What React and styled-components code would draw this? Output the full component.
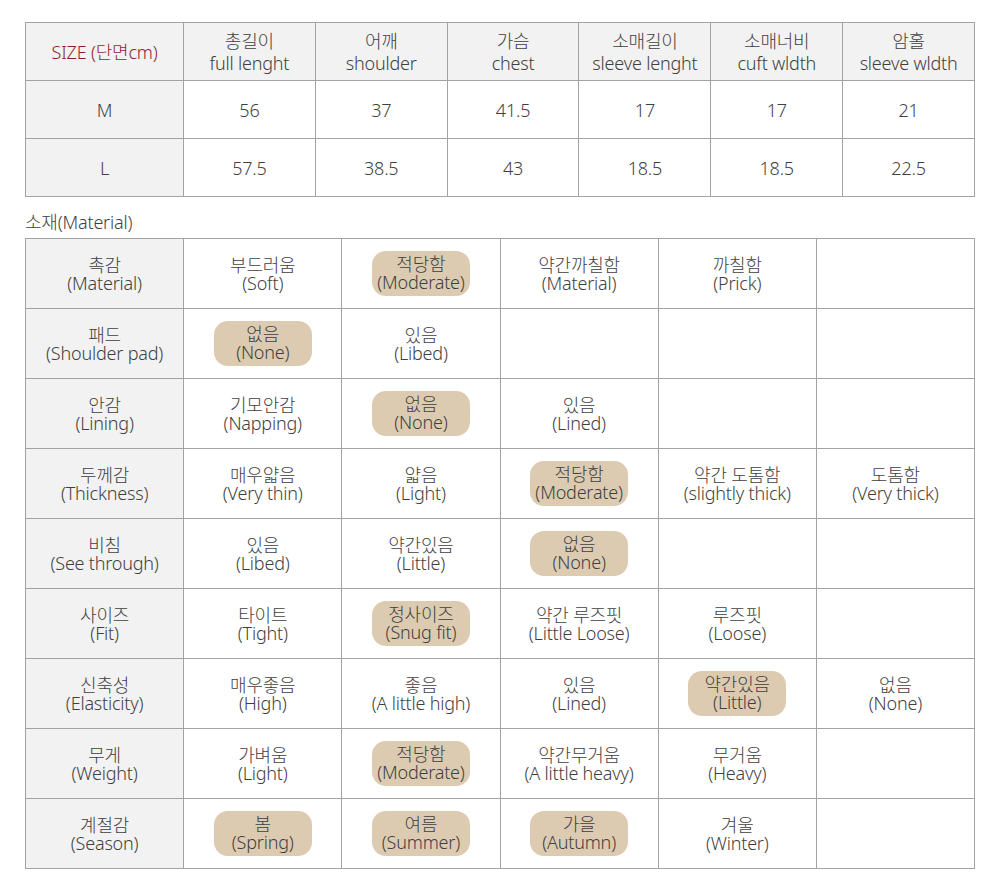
import React from 'react';
import styled, { createGlobalStyle } from 'styled-components';

const GlobalStyle = createGlobalStyle`
  body {
    margin: 0;
    background: #ffffff;
    font-family: 'Noto Sans', 'Noto Sans CJK KR', sans-serif;
    font-weight: 300;
    color: #3f3f3f;
  }
`;

const Page = styled.div`
  width: 950px;
  padding: 22px 25px 18px;
`;

const Grid = styled.div`
  display: grid;
  grid-template-columns: ${({ first }) => first} repeat(${({ cols }) => cols}, 1fr);
  grid-auto-rows: ${({ rowH }) => rowH}px;
  gap: 1px;
  background: #a3a3a3;
  border: 1px solid #a3a3a3;
`;

const Cell = styled.div`
  display: flex;
  flex-direction: column;
  align-items: center;
  justify-content: center;
  text-align: center;
  background: ${({ shade }) => (shade ? '#f2f2f2' : '#ffffff')};
  color: ${({ accent }) => (accent ? '#8e1f2c' : '#3f3f3f')};
  font-size: 18px;
  line-height: 22px;
  letter-spacing: -0.2px;
`;

const Stack = styled.div`
  display: flex;
  flex-direction: column;
  align-items: center;
  line-height: 18px;
  font-size: 18px;
`;

const Pill = styled(Stack)`
  background: #dccbb1;
  border-radius: 14px;
  min-width: 98px;
  padding: 4px 5px 5px;
  box-sizing: border-box;
`;

const Label = styled.div`
  font-size: 18px;
  margin: 15px 0 6px;
  line-height: 20px;
  letter-spacing: -0.2px;
`;

const sizeHead = [
  ['총길이', 'full lenght'],
  ['어깨', 'shoulder'],
  ['가슴', 'chest'],
  ['소매길이', 'sleeve lenght'],
  ['소매너비', 'cuft wldth'],
  ['암홀', 'sleeve wldth'],
];

const sizeRows = [
  ['M', '56', '37', '41.5', '17', '17', '21'],
  ['L', '57.5', '38.5', '43', '18.5', '18.5', '22.5'],
];

// [ko, en, selected]
const material = [
  [['촉감', '(Material)'], [['부드러움', '(Soft)'], ['적당함', '(Moderate)', 1], ['약간까칠함', '(Material)'], ['까칠함', '(Prick)']]],
  [['패드', '(Shoulder pad)'], [['없음', '(None)', 1], ['있음', '(Libed)']]],
  [['안감', '(Lining)'], [['기모안감', '(Napping)'], ['없음', '(None)', 1], ['있음', '(Lined)']]],
  [['두께감', '(Thickness)'], [['매우얇음', '(Very thin)'], ['얇음', '(Light)'], ['적당함', '(Moderate)', 1], ['약간 도톰함', '(slightly thick)'], ['도톰함', '(Very thick)']]],
  [['비침', '(See through)'], [['있음', '(Libed)'], ['약간있음', '(Little)'], ['없음', '(None)', 1]]],
  [['사이즈', '(Fit)'], [['타이트', '(Tight)'], ['정사이즈', '(Snug fit)', 1], ['약간 루즈핏', '(Little Loose)'], ['루즈핏', '(Loose)']]],
  [['신축성', '(Elasticity)'], [['매우좋음', '(High)'], ['좋음', '(A little high)'], ['있음', '(Lined)'], ['약간있음', '(Little)', 1], ['없음', '(None)']]],
  [['무게', '(Weight)'], [['가벼움', '(Light)'], ['적당함', '(Moderate)', 1], ['약간무거움', '(A little heavy)'], ['무거움', '(Heavy)']]],
  [['계절감', '(Season)'], [['봄', '(Spring)', 1], ['여름', '(Summer)', 1], ['가을', '(Autumn)', 1], ['겨울', '(Winter)']]],
];

function Option({ ko, en, on }) {
  const Box = on ? Pill : Stack;
  return (
    <Box>
      <span>{ko}</span>
      <span>{en}</span>
    </Box>
  );
}

export default function App() {
  return (
    <Page>
      <GlobalStyle />
      <Grid first="157px" cols={6} rowH={57}>
        <Cell shade accent>SIZE (단면cm)</Cell>
        {sizeHead.map(([ko, en]) => (
          <Cell shade key={en}>
            <span>{ko}</span>
            <span>{en}</span>
          </Cell>
        ))}
        {sizeRows.map((row) =>
          row.map((v, i) => (
            <Cell shade={i === 0} key={row[0] + i}>{v}</Cell>
          ))
        )}
      </Grid>

      <Label>소재(Material)</Label>

      <Grid first="1fr" cols={5} rowH={69}>
        {material.map(([head, opts]) => {
          const cells = [...opts];
          while (cells.length < 5) cells.push(null);
          return (
            <React.Fragment key={head[1]}>
              <Cell shade>
                <Stack>
                  <span>{head[0]}</span>
                  <span>{head[1]}</span>
                </Stack>
              </Cell>
              {cells.map((o, i) => (
                <Cell key={i}>
                  {o && <Option ko={o[0]} en={o[1]} on={o[2]} />}
                </Cell>
              ))}
            </React.Fragment>
          );
        })}
      </Grid>
    </Page>
  );
}
